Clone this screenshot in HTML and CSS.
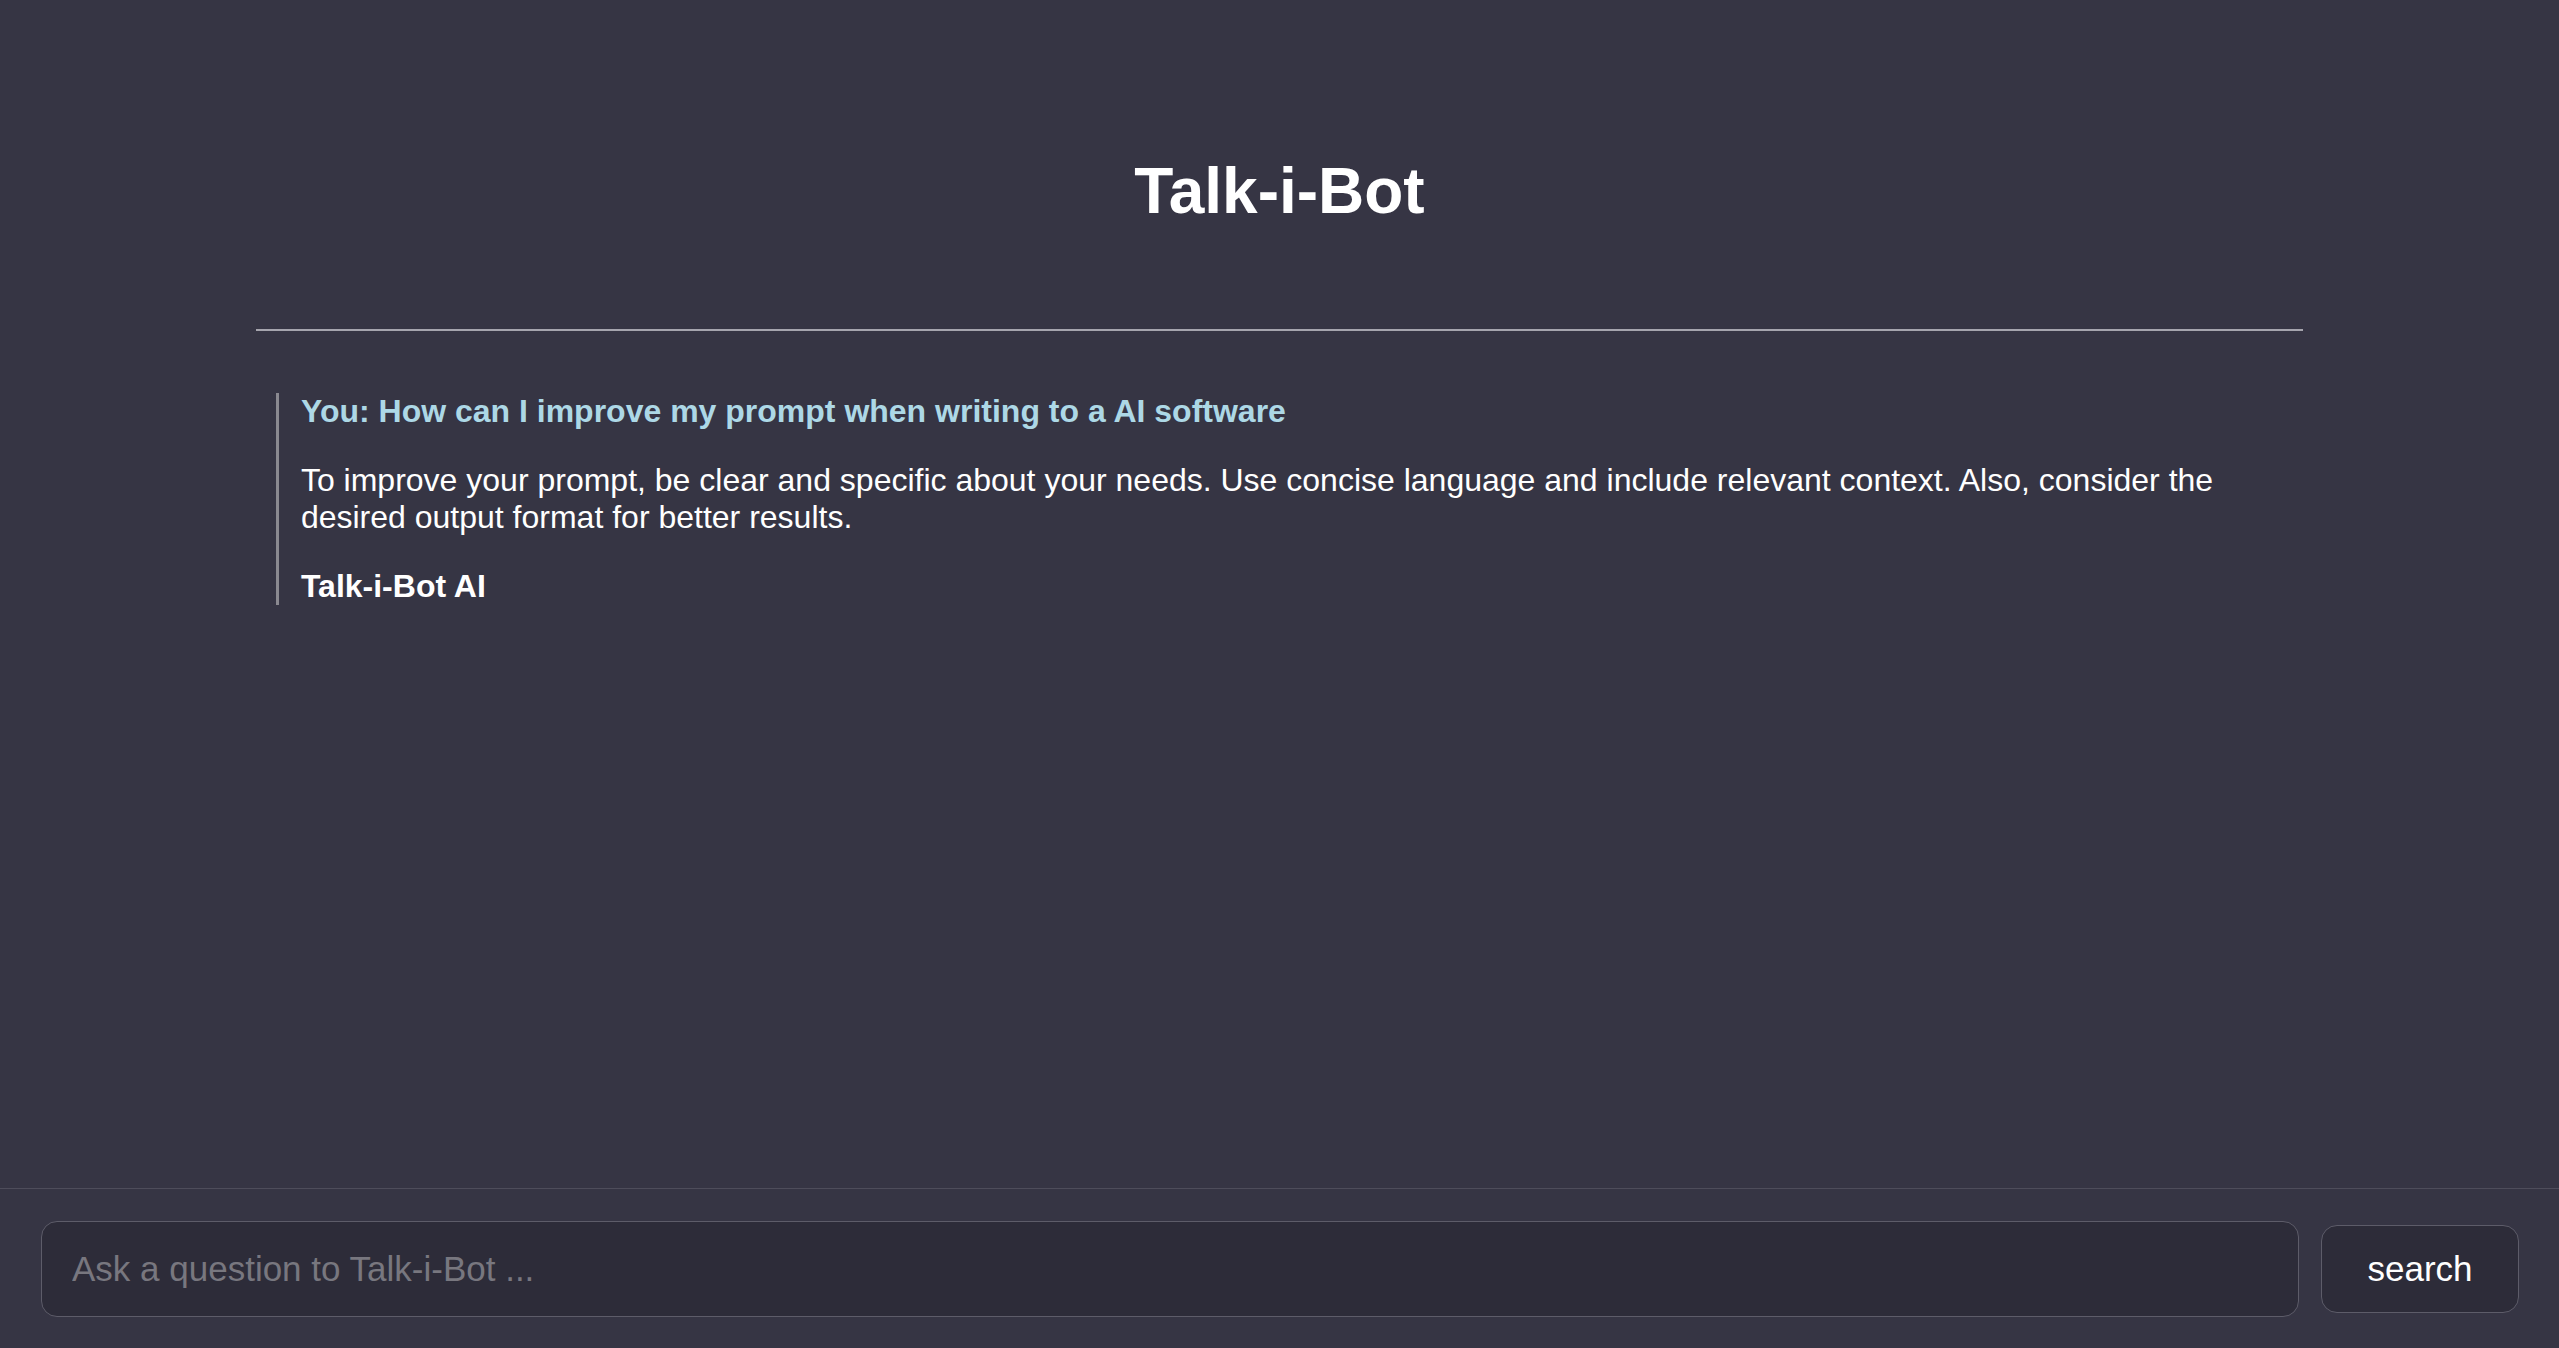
FILE: index.html
```html
<!DOCTYPE html>
<html lang="en">
<head>
<meta charset="utf-8">
<title>Talk-i-Bot</title>
<link rel="stylesheet" href="styles.css">
</head>
<body>
<div class="page">
  <main class="main">
    <h1 class="title">Talk-i-Bot</h1>
    <hr class="divider">
    <section class="chat">
      <article class="entry">
        <h3 class="question">You: How can I improve my prompt when writing to a AI software</h3>
        <p class="answer">To improve your prompt, be clear and specific about your needs. Use concise language and include relevant context. Also, consider the desired output format for better results.</p>
        <div class="signature">Talk-i-Bot AI</div>
      </article>
    </section>
  </main>
  <footer class="footer">
    <input class="ask" type="text" placeholder="Ask a question to Talk-i-Bot ...">
    <button class="search" type="button">search</button>
  </footer>
</div>
</body>
</html>
```
FILE: styles.css
```css
* { box-sizing: border-box; }
html, body {
  margin: 0;
  padding: 0;
  background: #363544;
  color: #ffffff;
  font-family: "Liberation Sans", Arial, Helvetica, sans-serif;
}
.page {
  min-height: 100vh;
  display: flex;
  flex-direction: column;
}
.main {
  flex: 1;
  width: 80%;
  margin: 0 auto;
  padding-top: 154px;
}
.title {
  margin: 0 0 101px;
  text-align: center;
  font-size: 64px;
  font-weight: bold;
}
.divider {
  margin: 0;
  border: 0;
  height: 2px;
  background: #a6a5ae;
}
.chat {
  margin-top: 62px;
  padding: 0 20px;
}
.entry {
  border-left: 3px solid #8a8990;
  padding-left: 22px;
  font-size: 32px;
}
.question {
  margin: 0;
  font-size: 32px;
  font-weight: bold;
  color: #add8e6;
}
.answer {
  margin: 32px 0;
  font-size: 32px;
}
.signature {
  font-weight: bold;
}
.footer {
  height: 160px;
  border-top: 1px solid #4e4d5b;
  display: flex;
  align-items: center;
  gap: 22px;
  padding: 0 40px 0 41px;
}
.ask {
  flex: 1;
  height: 96px;
  background: #2d2c39;
  border: 1px solid #5d5c69;
  border-radius: 16px;
  padding: 0 30px;
  font-family: "Liberation Sans", Arial, sans-serif;
  font-size: 35px;
  color: #ffffff;
  outline: none;
}
.ask::placeholder {
  color: #78777f;
}
.search {
  width: 198px;
  height: 88px;
  background: #2d2c39;
  border: 1px solid #5d5c69;
  border-radius: 16px;
  color: #ffffff;
  font-family: "Liberation Sans", Arial, sans-serif;
  font-size: 35px;
  padding: 0;
}
```
